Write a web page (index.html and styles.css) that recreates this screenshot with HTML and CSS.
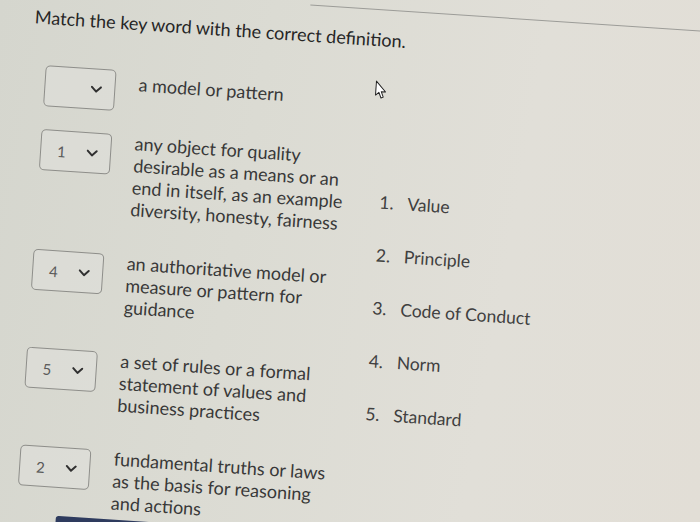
FILE: index.html
```html
<!DOCTYPE html>
<html lang="en">
<head>
<meta charset="utf-8">
<title>Match the key word</title>
<link rel="stylesheet" href="styles.css">
</head>
<body>
<div class="page">
  <div class="topline"></div>
  <h1 class="title">Match the key word with the correct definition.</h1>
  <div class="main">
    <div class="pairs">
      <div class="row row--single">
        <div class="select"><span class="sel-val"></span><svg class="chev" viewBox="0 0 12 8"><path d="M1.5 1.5 L6 6 L10.5 1.5"/></svg></div>
        <div class="def def--single">a model or pattern</div>
      </div>
      <div class="row">
        <div class="select"><span class="sel-val">1</span><svg class="chev" viewBox="0 0 12 8"><path d="M1.5 1.5 L6 6 L10.5 1.5"/></svg></div>
        <div class="def">any object for quality desirable as a means or an end in itself, as an example diversity, honesty, fairness</div>
      </div>
      <div class="row">
        <div class="select"><span class="sel-val">4</span><svg class="chev" viewBox="0 0 12 8"><path d="M1.5 1.5 L6 6 L10.5 1.5"/></svg></div>
        <div class="def">an authoritative model or measure or pattern for guidance</div>
      </div>
      <div class="row">
        <div class="select"><span class="sel-val">5</span><svg class="chev" viewBox="0 0 12 8"><path d="M1.5 1.5 L6 6 L10.5 1.5"/></svg></div>
        <div class="def">a set of rules or a formal statement of values and business practices</div>
      </div>
      <div class="row">
        <div class="select"><span class="sel-val">2</span><svg class="chev" viewBox="0 0 12 8"><path d="M1.5 1.5 L6 6 L10.5 1.5"/></svg></div>
        <div class="def">fundamental truths or laws as the basis for reasoning and actions</div>
      </div>
      <div class="footer"><div class="btn"></div></div>
    </div>
    <ol class="terms">
      <li><span class="num">1.</span><span>Value</span></li>
      <li><span class="num">2.</span><span>Principle</span></li>
      <li><span class="num">3.</span><span>Code of Conduct</span></li>
      <li><span class="num">4.</span><span>Norm</span></li>
      <li><span class="num">5.</span><span>Standard</span></li>
    </ol>
  </div>
  <svg class="cursor" viewBox="0 0 12 19" width="12" height="19"><path d="M1 1 L1 15 L4.2 12 L6.6 17.5 L8.8 16.5 L6.5 11.2 L10.8 11.2 Z"/></svg>
</div>
</body>
</html>
```
FILE: styles.css
```css
html, body {
  margin: 0;
  padding: 0;
  width: 700px;
  height: 522px;
  overflow: hidden;
}
body {
  background: linear-gradient(100deg, #d5d6ce 0%, #dbdbd3 35%, #e1dfd8 70%, #e2ded6 100%);
  font-family: Lato, "Open Sans", "Liberation Sans", sans-serif;
  color: #383838;
}
.page {
  position: relative;
  width: 760px;
  margin-top: -30px;
  transform: rotate(3.8deg);
  transform-origin: 0 30px;
}
.topline {
  height: 14px;
  border-bottom: 1px solid #9c9c98;
  margin-left: 310px;
}
.title {
  margin: 18px 0 0 36px;
  font-size: 18px;
  line-height: 22px;
  font-weight: 400;
  color: #262626;
}
.main {
  display: flex;
  margin-top: 37px;
  margin-left: 50px;
}
.pairs {
  width: 342px;
  display: flex;
  flex-direction: column;
}
.row {
  display: flex;
  align-items: flex-start;
  margin-bottom: 32px;
}
.row--single {
  margin-bottom: 20px;
}
.select {
  flex: none;
  width: 69px;
  height: 39px;
  margin-top: 3px;
  border: 1px solid #8e8e8a;
  border-radius: 5px;
  display: flex;
  align-items: center;
  box-sizing: content-box;
  background: rgba(230, 230, 225, 0.35);
}
.row--single .select {
  margin-top: 0;
}
.sel-val {
  width: 16px;
  margin-left: 16px;
  font-size: 15px;
  color: #5a5a5a;
}
.chev {
  width: 12px;
  height: 8px;
  margin-left: 13px;
  fill: none;
  stroke: #303030;
  stroke-width: 2;
  stroke-linecap: round;
  stroke-linejoin: round;
}
.def {
  width: 222px;
  margin-left: 23px;
  font-size: 18px;
  line-height: 22px;
  color: #383838;
}
.def--single {
  margin-top: 2px;
}
.footer {
  margin-top: -26px;
  padding-left: 40px;
}
.btn {
  width: 130px;
  height: 30px;
  background: #2e3b5e;
  border-radius: 3px;
}
.terms {
  list-style: none;
  margin: 0;
  padding: 104px 0 0 0;
}
.terms li {
  display: flex;
  font-size: 17.5px;
  line-height: 22px;
  color: #404040;
  margin-bottom: 31px;
}
.num {
  width: 28px;
}
.cursor {
  position: absolute;
  left: 380px;
  top: 85px;
  fill: #ffffff;
  stroke: #222;
  stroke-width: 1;
  stroke-linejoin: round;
}
```
